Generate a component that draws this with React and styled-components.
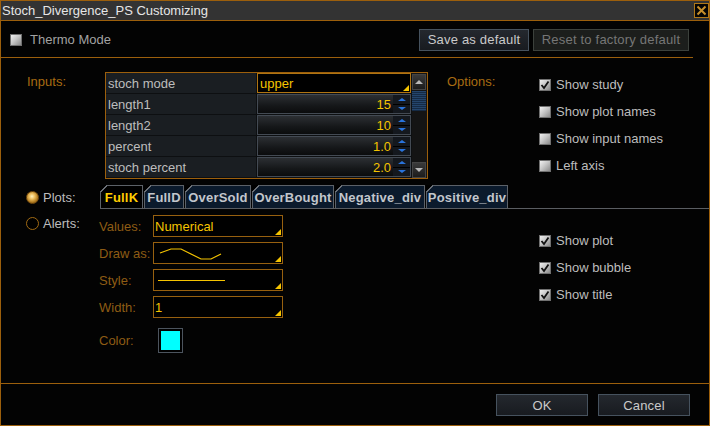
import styled, { createGlobalStyle } from "styled-components";

const ORANGE = "#9c5f0c";
const LABEL = "#a86c12";
const YELLOW = "#f5c400";
const TEXT = "#bdbdbd";

const GlobalStyle = createGlobalStyle`
  html, body { margin: 0; padding: 0; background: #000; }
  body { font-family: "Liberation Sans", Arial, sans-serif; font-size: 13px; }
  * { box-sizing: border-box; }
`;

const Window = styled.div`
  width: 710px;
  height: 426px;
  border: 1px solid ${ORANGE};
  background: #030303;
  display: flex;
  flex-direction: column;
  overflow: hidden;
`;

const TitleBar = styled.div`
  height: 20px;
  flex: none;
  background: #333;
  border-bottom: 1px solid ${ORANGE};
  display: flex;
  align-items: center;
  justify-content: space-between;
  padding-left: 1px;
  color: #e6e6e6;
`;

const CloseBox = styled.div`
  width: 15px;
  height: 15px;
  background: #050505;
  border: 1px solid #b07818;
  display: flex;
  align-items: center;
  justify-content: center;
`;

const TopRow = styled.div`
  height: 36px;
  flex: none;
  display: flex;
  align-items: center;
  padding: 1px 20px 0 9px;
`;

const Grow = styled.div`
  flex: 1;
`;

const Separator = styled.div`
  height: 1px;
  flex: none;
  background: ${ORANGE};
  margin-right: ${(p) => p.$right || 0}px;
`;

const Button = styled.div`
  height: 22px;
  width: ${(p) => p.$w}px;
  margin-left: ${(p) => p.$gap || 0}px;
  display: flex;
  align-items: center;
  justify-content: center;
  border: 1px solid ${(p) => (p.$disabled ? "#3c413c" : "#46525e")};
  background: ${(p) =>
    p.$disabled ? "#1c1e1c" : "linear-gradient(#24282e, #181b20)"};
  color: ${(p) => (p.$disabled ? "#767676" : "#cacaca")};
  letter-spacing: 0.2px;
`;

const Box = styled.span`
  width: 12px;
  height: 12px;
  flex: none;
  border: 1px solid #707070;
  background: linear-gradient(135deg, #f0f0f0 0%, #c8c8c8 45%, #8a8a8a 100%);
  display: flex;
  align-items: center;
  justify-content: center;
`;

const CheckRow = styled.div`
  height: ${(p) => p.$h || 27}px;
  display: flex;
  align-items: center;
  gap: ${(p) => p.$gap || 5}px;
  color: ${(p) => p.$color || TEXT};
  white-space: nowrap;
`;

const Main = styled.div`
  flex: 1;
  padding-top: 14px;
  display: flex;
  flex-direction: column;
`;

const InputsRow = styled.div`
  height: 107px;
  display: flex;
  align-items: flex-start;
  padding-left: 26px;
`;

const SectionLabel = styled.div`
  width: ${(p) => p.$w}px;
  margin-left: ${(p) => p.$ml || 0}px;
  padding-top: 2px;
  color: ${LABEL};
  flex: none;
`;

const ListBox = styled.div`
  width: 323px;
  height: 107px;
  border: 1px solid ${ORANGE};
  background: #0d0f11;
  display: flex;
  flex: none;
`;

const Rows = styled.div`
  width: 305px;
  display: flex;
  flex-direction: column;
  gap: 1px;
`;

const ParamRow = styled.div`
  height: 20px;
  display: flex;
  gap: 1px;
`;

const ParamName = styled.div`
  width: 150px;
  background: #1a1e22;
  color: ${TEXT};
  padding-left: 2px;
  display: flex;
  align-items: center;
`;

const ParamValue = styled.div`
  width: 154px;
  height: 20px;
  display: flex;
  align-items: stretch;
  border: 1px solid ${(p) => (p.$select ? "#b07412" : "#434a53")};
  background: ${(p) =>
    p.$select ? "#000" : "linear-gradient(#2c2f33, #151719 60%, #0b0c0d)"};
  color: ${YELLOW};
  position: relative;
  ${(p) =>
    p.$select &&
    `&::after {
      content: "";
      position: absolute;
      right: 1px;
      bottom: 1px;
      border-left: 6px solid transparent;
      border-bottom: 6px solid ${YELLOW};
    }`}
`;

const ValueText = styled.div`
  flex: 1;
  display: flex;
  align-items: center;
  justify-content: ${(p) => (p.$left ? "flex-start" : "flex-end")};
  padding: 0 2px;
`;

const Spinner = styled.div`
  width: 17px;
  display: flex;
  flex-direction: column;
  gap: 1px;
  background: #000;
`;

const SpinHalf = styled.div`
  flex: 1;
  background: #14181e;
  display: flex;
  align-items: center;
  justify-content: center;
  &::before {
    content: "";
    border-left: 4px solid transparent;
    border-right: 4px solid transparent;
    ${(p) => (p.$down ? "border-top" : "border-bottom")}: 3px solid #2a74dc;
  }
`;

const Scrollbar = styled.div`
  width: 16px;
  margin-left: 1px;
  background: #141414;
  display: flex;
  flex-direction: column;
  padding: 1px 1px 0 0;
`;

const ScrollBtn = styled.div`
  height: 16px;
  background: linear-gradient(#3a3a3a, #1c1c1c);
  border: 1px solid #444;
  display: flex;
  align-items: center;
  justify-content: center;
  margin-top: ${(p) => (p.$down ? "auto" : "0")};
  &::before {
    content: "";
    border-left: 4px solid transparent;
    border-right: 4px solid transparent;
    ${(p) => (p.$down ? "border-top" : "border-bottom")}: 4px solid #b8b8b8;
  }
`;

const Thumb = styled.div`
  height: 20px;
  margin-top: 1px;
  background: repeating-linear-gradient(#24456c 0, #24456c 1px, #152a44 1px, #152a44 2px);
`;

const OptionsCol = styled.div`
  display: flex;
  flex-direction: column;
  margin-top: -1px;
`;

const PlotsSection = styled.div`
  margin-top: 6px;
  display: flex;
`;

const RadioCol = styled.div`
  width: 99px;
  flex: none;
  padding-left: 25px;
`;

const RadioRow = styled.div`
  height: ${(p) => p.$h}px;
  display: flex;
  align-items: center;
  gap: 4px;
  color: ${TEXT};
`;

const Radio = styled.span`
  width: 13px;
  height: 13px;
  border-radius: 50%;
  border: 1px solid ${(p) => (p.$on ? "#7a4f10" : "#a06a14")};
  background: ${(p) =>
    p.$on
      ? "radial-gradient(circle at 45% 40%, #fff2c0 0, #eec060 30%, #b07a20 65%, #5a3a08 100%)"
      : "#000"};
  flex: none;
`;

const PlotArea = styled.div`
  flex: 1;
  display: flex;
  flex-direction: column;
`;

const TabStrip = styled.div`
  height: 24px;
  display: flex;
  align-items: flex-end;
  border-bottom: 1px solid #5a5d62;
`;

const Tab = styled.div`
  position: relative;
  height: 23px;
  width: ${(p) => p.$w}px;
  margin-right: 1px;
  border: 1px solid #5c6168;
  border-bottom: none;
  background: ${(p) => (p.$active ? "#000" : "#0b1a2c")};
  color: ${(p) => (p.$active ? "#ffcc00" : "#c2c6cc")};
  font-weight: bold;
  letter-spacing: 0.2px;
  display: flex;
  align-items: center;
  justify-content: center;
  padding-top: 1px;
  &::before {
    content: "";
    position: absolute;
    top: -1px;
    left: -1px;
    width: 7px;
    height: 7px;
    background: linear-gradient(135deg, #000 0 46%, #6a6f76 46% 58%, transparent 58%);
  }
`;

const Body = styled.div`
  display: flex;
  padding-top: 6px;
`;

const Form = styled.div`
  width: 184px;
  display: flex;
  flex-direction: column;
  gap: 5px;
`;

const FieldRow = styled.div`
  display: flex;
  align-items: center;
  height: ${(p) => p.$h || 22}px;
  margin-top: ${(p) => p.$mt || 0}px;
`;

const FieldLabel = styled.div`
  width: 54px;
  margin-left: -1px;
  color: #8e5c14;
  flex: none;
`;

const Field = styled.div`
  position: relative;
  width: 130px;
  height: 22px;
  border: 1px solid #97600f;
  background: #000;
  color: ${YELLOW};
  display: flex;
  align-items: center;
  padding-left: 1px;
  &::after {
    content: "";
    position: absolute;
    right: 1px;
    bottom: 1px;
    border-left: 6px solid transparent;
    border-bottom: 6px solid ${YELLOW};
  }
`;

const Swatch = styled.div`
  width: 25px;
  height: 25px;
  margin-left: 5px;
  border: 1px solid #4c545e;
  padding: 2px;
  background: #000;
  &::before {
    content: "";
    display: block;
    width: 100%;
    height: 100%;
    background: #00ffff;
  }
`;

const PlotChecks = styled.div`
  margin-left: 255px;
  margin-top: 12px;
  display: flex;
  flex-direction: column;
`;

const Footer = styled.div`
  height: 41px;
  flex: none;
  display: flex;
  justify-content: flex-end;
  padding: 10px 19px 0 0;
`;

const Check = ({ checked }) => (
  <Box>
    {checked && (
      <svg width="10" height="10" viewBox="0 0 10 10">
        <path d="M1.5 5 L4 8 L8.5 1.5" fill="none" stroke="#111" strokeWidth="1.8" />
      </svg>
    )}
  </Box>
);

const CheckItem = ({ checked, label, color, h, gap }) => (
  <CheckRow $color={color} $h={h} $gap={gap}>
    <Check checked={checked} />
    {label}
  </CheckRow>
);

const params = [
  { name: "stoch mode", value: "upper", select: true },
  { name: "length1", value: "15" },
  { name: "length2", value: "10" },
  { name: "percent", value: "1.0" },
  { name: "stoch percent", value: "2.0" },
];

const tabs = [
  { label: "FullK", w: 43 },
  { label: "FullD", w: 40 },
  { label: "OverSold", w: 66 },
  { label: "OverBought", w: 82 },
  { label: "Negative_div", w: 90 },
  { label: "Positive_div", w: 82 },
];

export default function App() {
  return (
    <>
      <GlobalStyle />
      <Window>
        <TitleBar>
          Stoch_Divergence_PS Customizing
          <CloseBox>
            <svg width="11" height="11" viewBox="0 0 11 11">
              <path d="M1.5 1.5 L9.5 9.5 M9.5 1.5 L1.5 9.5" stroke="#c8902c" strokeWidth="2" />
            </svg>
          </CloseBox>
        </TitleBar>

        <TopRow>
          <CheckItem label="Thermo Mode" color="#a2a2a2" h={36} gap={8} />
          <Grow />
          <Button $w={110}>Save as default</Button>
          <Button $w={156} $gap={4} $disabled>
            Reset to factory default
          </Button>
        </TopRow>
        <Separator $right={16} />

        <Main>
          <InputsRow>
            <SectionLabel $w={78}>Inputs:</SectionLabel>
            <ListBox>
              <Rows>
                {params.map((p) => (
                  <ParamRow key={p.name}>
                    <ParamName>{p.name}</ParamName>
                    <ParamValue $select={p.select}>
                      <ValueText $left={p.select}>{p.value}</ValueText>
                      {!p.select && (
                        <Spinner>
                          <SpinHalf />
                          <SpinHalf $down />
                        </Spinner>
                      )}
                    </ParamValue>
                  </ParamRow>
                ))}
              </Rows>
              <Scrollbar>
                <ScrollBtn />
                <Thumb />
                <ScrollBtn $down />
              </Scrollbar>
            </ListBox>
            <SectionLabel $w={92} $ml={19}>
              Options:
            </SectionLabel>
            <OptionsCol>
              <CheckItem checked label="Show study" />
              <CheckItem label="Show plot names" />
              <CheckItem label="Show input names" />
              <CheckItem label="Left axis" />
            </OptionsCol>
          </InputsRow>

          <PlotsSection>
            <RadioCol>
              <RadioRow $h={24}>
                <Radio $on />
                Plots:
              </RadioRow>
              <RadioRow $h={28}>
                <Radio />
                Alerts:
              </RadioRow>
            </RadioCol>
            <PlotArea>
              <TabStrip>
                {tabs.map((t, i) => (
                  <Tab key={t.label} $w={t.w} $active={i === 0}>
                    {t.label}
                  </Tab>
                ))}
              </TabStrip>
              <Body>
                <Form>
                  <FieldRow>
                    <FieldLabel>Values:</FieldLabel>
                    <Field>Numerical</Field>
                  </FieldRow>
                  <FieldRow>
                    <FieldLabel>Draw as:</FieldLabel>
                    <Field>
                      <svg width="110" height="20" viewBox="0 0 110 20">
                        <polyline
                          points="5,10 16,6 26,6 46,16 56,16 66,11"
                          fill="none"
                          stroke={YELLOW}
                          strokeWidth="1.2"
                        />
                      </svg>
                    </Field>
                  </FieldRow>
                  <FieldRow>
                    <FieldLabel>Style:</FieldLabel>
                    <Field>
                      <svg width="110" height="20" viewBox="0 0 110 20">
                        <line x1="3" y1="10.5" x2="70" y2="10.5" stroke={YELLOW} strokeWidth="1" />
                      </svg>
                    </Field>
                  </FieldRow>
                  <FieldRow>
                    <FieldLabel>Width:</FieldLabel>
                    <Field>1</Field>
                  </FieldRow>
                  <FieldRow $h={25} $mt={5}>
                    <FieldLabel>Color:</FieldLabel>
                    <Swatch />
                  </FieldRow>
                </Form>
                <PlotChecks>
                  <CheckItem checked label="Show plot" />
                  <CheckItem checked label="Show bubble" />
                  <CheckItem checked label="Show title" />
                </PlotChecks>
              </Body>
            </PlotArea>
          </PlotsSection>
        </Main>

        <Separator />
        <Footer>
          <Button $w={92}>OK</Button>
          <Button $w={92} $gap={10}>
            Cancel
          </Button>
        </Footer>
      </Window>
    </>
  );
}
